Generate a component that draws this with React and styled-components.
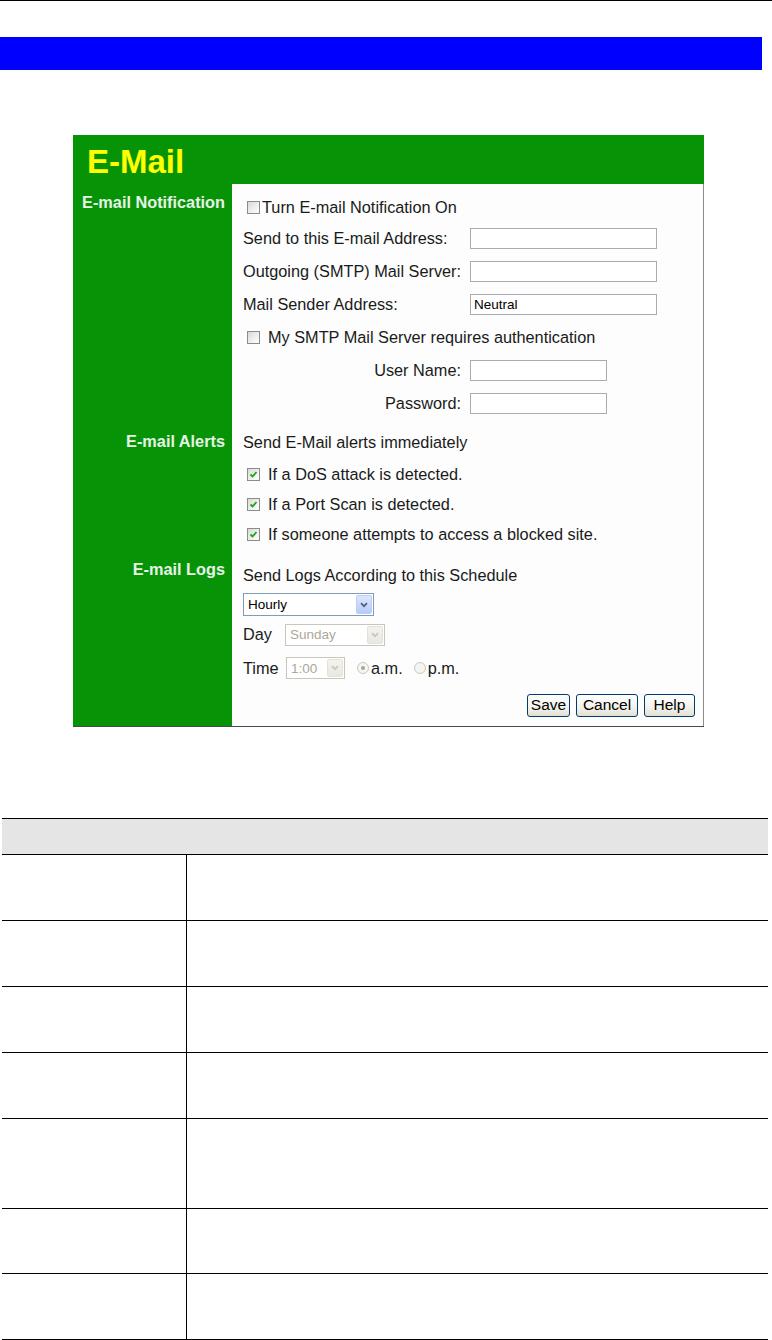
import styled, { createGlobalStyle } from "styled-components";

const Global = createGlobalStyle`
  body {
    margin: 0;
    background: #fff;
    font-family: "Liberation Sans", Arial, sans-serif;
  }
`;

const Page = styled.div`
  border-top: 1px solid #000;
`;

const BlueBar = styled.div`
  margin-top: 36px;
  width: 762px;
  height: 33px;
  background: #0000ff;
`;

const Panel = styled.div`
  margin: 65px 0 0 73px;
  width: 631px;
  display: grid;
  grid-template-columns: 159px 472px;
  background: #069406;
  border-bottom: 1px solid #4a4a4a;
`;

const Title = styled.div`
  grid-column: 1 / -1;
  height: 49px;
  box-sizing: border-box;
  padding: 10px 0 0 14px;
  font-size: 33px;
  line-height: 1;
  font-weight: bold;
  color: #ffff00;
`;

const SectionLabel = styled.div`
  padding: ${(p) => p.$top}px 7px 0 0;
  text-align: right;
  font-size: 16.3px;
  line-height: 18px;
  font-weight: bold;
  color: #e6f3e6;
`;

const SectionBody = styled.div`
  box-sizing: border-box;
  background: #fcfdfc;
  border-right: 1px solid #8c8c8c;
  padding: ${(p) => p.$top}px 0 0 11px;
  color: #1a1a1a;
  font-size: 16.3px;
`;

const Row = styled.div`
  display: flex;
  align-items: center;
  height: ${(p) => p.$h}px;
  justify-content: ${(p) => (p.$end ? "flex-end" : "flex-start")};
  padding-right: ${(p) => (p.$end ? 8 : 0)}px;
  gap: ${(p) => p.$gap || 0}px;
  white-space: nowrap;
`;

const FieldLabel = styled.span`
  width: 227px;
  box-sizing: border-box;
  text-align: ${(p) => (p.$right ? "right" : "left")};
  padding-right: ${(p) => (p.$right ? 9 : 0)}px;
`;

const TextField = styled.input`
  width: ${(p) => p.$w}px;
  height: 21px;
  box-sizing: border-box;
  border: 1px solid #a5acb2;
  background: #fff;
  padding: 0 3px;
  font-family: "Liberation Sans", Arial, sans-serif;
  font-size: 13.5px;
  color: #000;
  outline: none;
`;

const Box = styled.span`
  display: inline-flex;
  align-items: center;
  justify-content: center;
  width: 13px;
  height: 13px;
  box-sizing: border-box;
  margin: 0 ${(p) => p.$gap}px 0 4px;
  border: 1px solid #8a8c8e;
  background: linear-gradient(135deg, #dadad4, #f8f8f6 80%);
`;

const CheckBox = ({ checked, gap = 8 }) => (
  <Box $gap={gap}>
    {checked && (
      <svg width="9" height="9" viewBox="0 0 9 9">
        <path d="M1.5 4.5 L3.5 6.5 L7.5 2" fill="none" stroke="#21a121" strokeWidth="1.8" />
      </svg>
    )}
  </Box>
);

const SelectBox = styled.span`
  display: inline-flex;
  align-items: center;
  justify-content: space-between;
  width: ${(p) => p.$w}px;
  height: ${(p) => p.$h}px;
  box-sizing: border-box;
  border: 1px solid ${(p) => (p.$disabled ? "#c9c7ba" : "#7f9db9")};
  background: #fff;
  padding: 1px;
  font-size: 13.5px;
  color: ${(p) => (p.$disabled ? "#aca899" : "#000")};
`;

const SelectText = styled.span`
  padding-left: 3px;
`;

const Arrow = styled.span`
  display: flex;
  align-items: center;
  justify-content: center;
  width: 16px;
  height: 100%;
  box-sizing: border-box;
  border-radius: 2px;
  border: 1px solid ${(p) => (p.$disabled ? "#e3e2da" : "#b9cdf6")};
  background: ${(p) =>
    p.$disabled
      ? "linear-gradient(#f4f3ee, #e8e7e0)"
      : "linear-gradient(#dde7fd, #b7cbf7)"};
`;

const Select = ({ value, w, h = 23, disabled }) => (
  <SelectBox $w={w} $h={h} $disabled={disabled}>
    <SelectText>{value}</SelectText>
    <Arrow $disabled={disabled}>
      <svg width="8" height="6" viewBox="0 0 8 6">
        <path
          d="M1 1.2 L4 4.2 L7 1.2"
          fill="none"
          stroke={disabled ? "#c9c7ba" : "#4d6185"}
          strokeWidth="1.7"
        />
      </svg>
    </Arrow>
  </SelectBox>
);

const InlineLabel = styled.span`
  width: ${(p) => p.$w}px;
`;

const Radio = styled.span`
  display: inline-flex;
  align-items: center;
  justify-content: center;
  width: 12px;
  height: 12px;
  box-sizing: border-box;
  border-radius: 50%;
  margin: 0 2px 0 ${(p) => p.$ml}px;
  border: 1px solid #cac8bb;
  background: #f6f5f1;

  &::after {
    content: "";
    width: 4px;
    height: 4px;
    border-radius: 50%;
    background: ${(p) => (p.$checked ? "#a8a596" : "transparent")};
  }
`;

const Button = styled.button`
  width: ${(p) => p.$w}px;
  height: 23px;
  padding: 0;
  border: 1px solid #003c74;
  border-radius: 3px;
  background: linear-gradient(#ffffff, #f3f2ea 60%, #e3dfd3);
  font-family: "Liberation Sans", Arial, sans-serif;
  font-size: 15.5px;
  color: #000;
`;

const Table = styled.div`
  margin: 91px 0 0 2px;
  width: 766px;
`;

const HeadRow = styled.div`
  height: 35px;
  background: #e5e5e5;
  border-top: 1px solid #000;
  border-bottom: 1px solid #000;
`;

const BodyRow = styled.div`
  display: grid;
  grid-template-columns: 185px 1fr;
  height: ${(p) => p.$h - 1}px;
  border-bottom: 1px solid #000;
`;

const KeyCell = styled.div`
  border-right: 1px solid #000;
`;

const rows = [66, 66, 66, 66, 90, 65, 66];

export default function App() {
  return (
    <Page>
      <Global />
      <BlueBar />
      <Panel>
        <Title>E-Mail</Title>

        <SectionLabel $top={9}>E-mail Notification</SectionLabel>
        <SectionBody $top={8}>
          <Row $h={30}>
            <CheckBox gap={2} />
            <span>Turn E-mail Notification On</span>
          </Row>
          <Row $h={33}>
            <FieldLabel>Send to this E-mail Address:</FieldLabel>
            <TextField $w={187} readOnly />
          </Row>
          <Row $h={33}>
            <FieldLabel>Outgoing (SMTP) Mail Server:</FieldLabel>
            <TextField $w={187} readOnly />
          </Row>
          <Row $h={33}>
            <FieldLabel>Mail Sender Address:</FieldLabel>
            <TextField $w={187} defaultValue="Neutral" readOnly />
          </Row>
          <Row $h={33}>
            <CheckBox />
            <span>My SMTP Mail Server requires authentication</span>
          </Row>
          <Row $h={33}>
            <FieldLabel $right>User Name:</FieldLabel>
            <TextField $w={137} readOnly />
          </Row>
          <Row $h={33}>
            <FieldLabel $right>Password:</FieldLabel>
            <TextField $w={137} type="password" readOnly />
          </Row>
        </SectionBody>

        <SectionLabel $top={12}>E-mail Alerts</SectionLabel>
        <SectionBody $top={6}>
          <Row $h={33}>Send E-Mail alerts immediately</Row>
          <Row $h={30}>
            <CheckBox checked />
            <span>If a DoS attack is detected.</span>
          </Row>
          <Row $h={30}>
            <CheckBox checked />
            <span>If a Port Scan is detected.</span>
          </Row>
          <Row $h={30}>
            <CheckBox checked />
            <span>If someone attempts to access a blocked site.</span>
          </Row>
        </SectionBody>

        <SectionLabel $top={11}>E-mail Logs</SectionLabel>
        <SectionBody $top={10}>
          <Row $h={33}>Send Logs According to this Schedule</Row>
          <Row $h={25}>
            <Select value="Hourly" w={131} />
          </Row>
          <Row $h={35}>
            <InlineLabel $w={42}>Day</InlineLabel>
            <Select value="Sunday" w={100} h={22} disabled />
          </Row>
          <Row $h={32}>
            <InlineLabel $w={43}>Time</InlineLabel>
            <Select value="1:00" w={59} h={22} disabled />
            <Radio $ml={12} $checked />
            <span>a.m.</span>
            <Radio $ml={11} />
            <span>p.m.</span>
          </Row>
          <Row $h={42} $end $gap={6}>
            <Button $w={43}>Save</Button>
            <Button $w={62}>Cancel</Button>
            <Button $w={51}>Help</Button>
          </Row>
        </SectionBody>
      </Panel>

      <Table>
        <HeadRow />
        {rows.map((h, i) => (
          <BodyRow key={i} $h={h}>
            <KeyCell />
            <div />
          </BodyRow>
        ))}
      </Table>
    </Page>
  );
}
